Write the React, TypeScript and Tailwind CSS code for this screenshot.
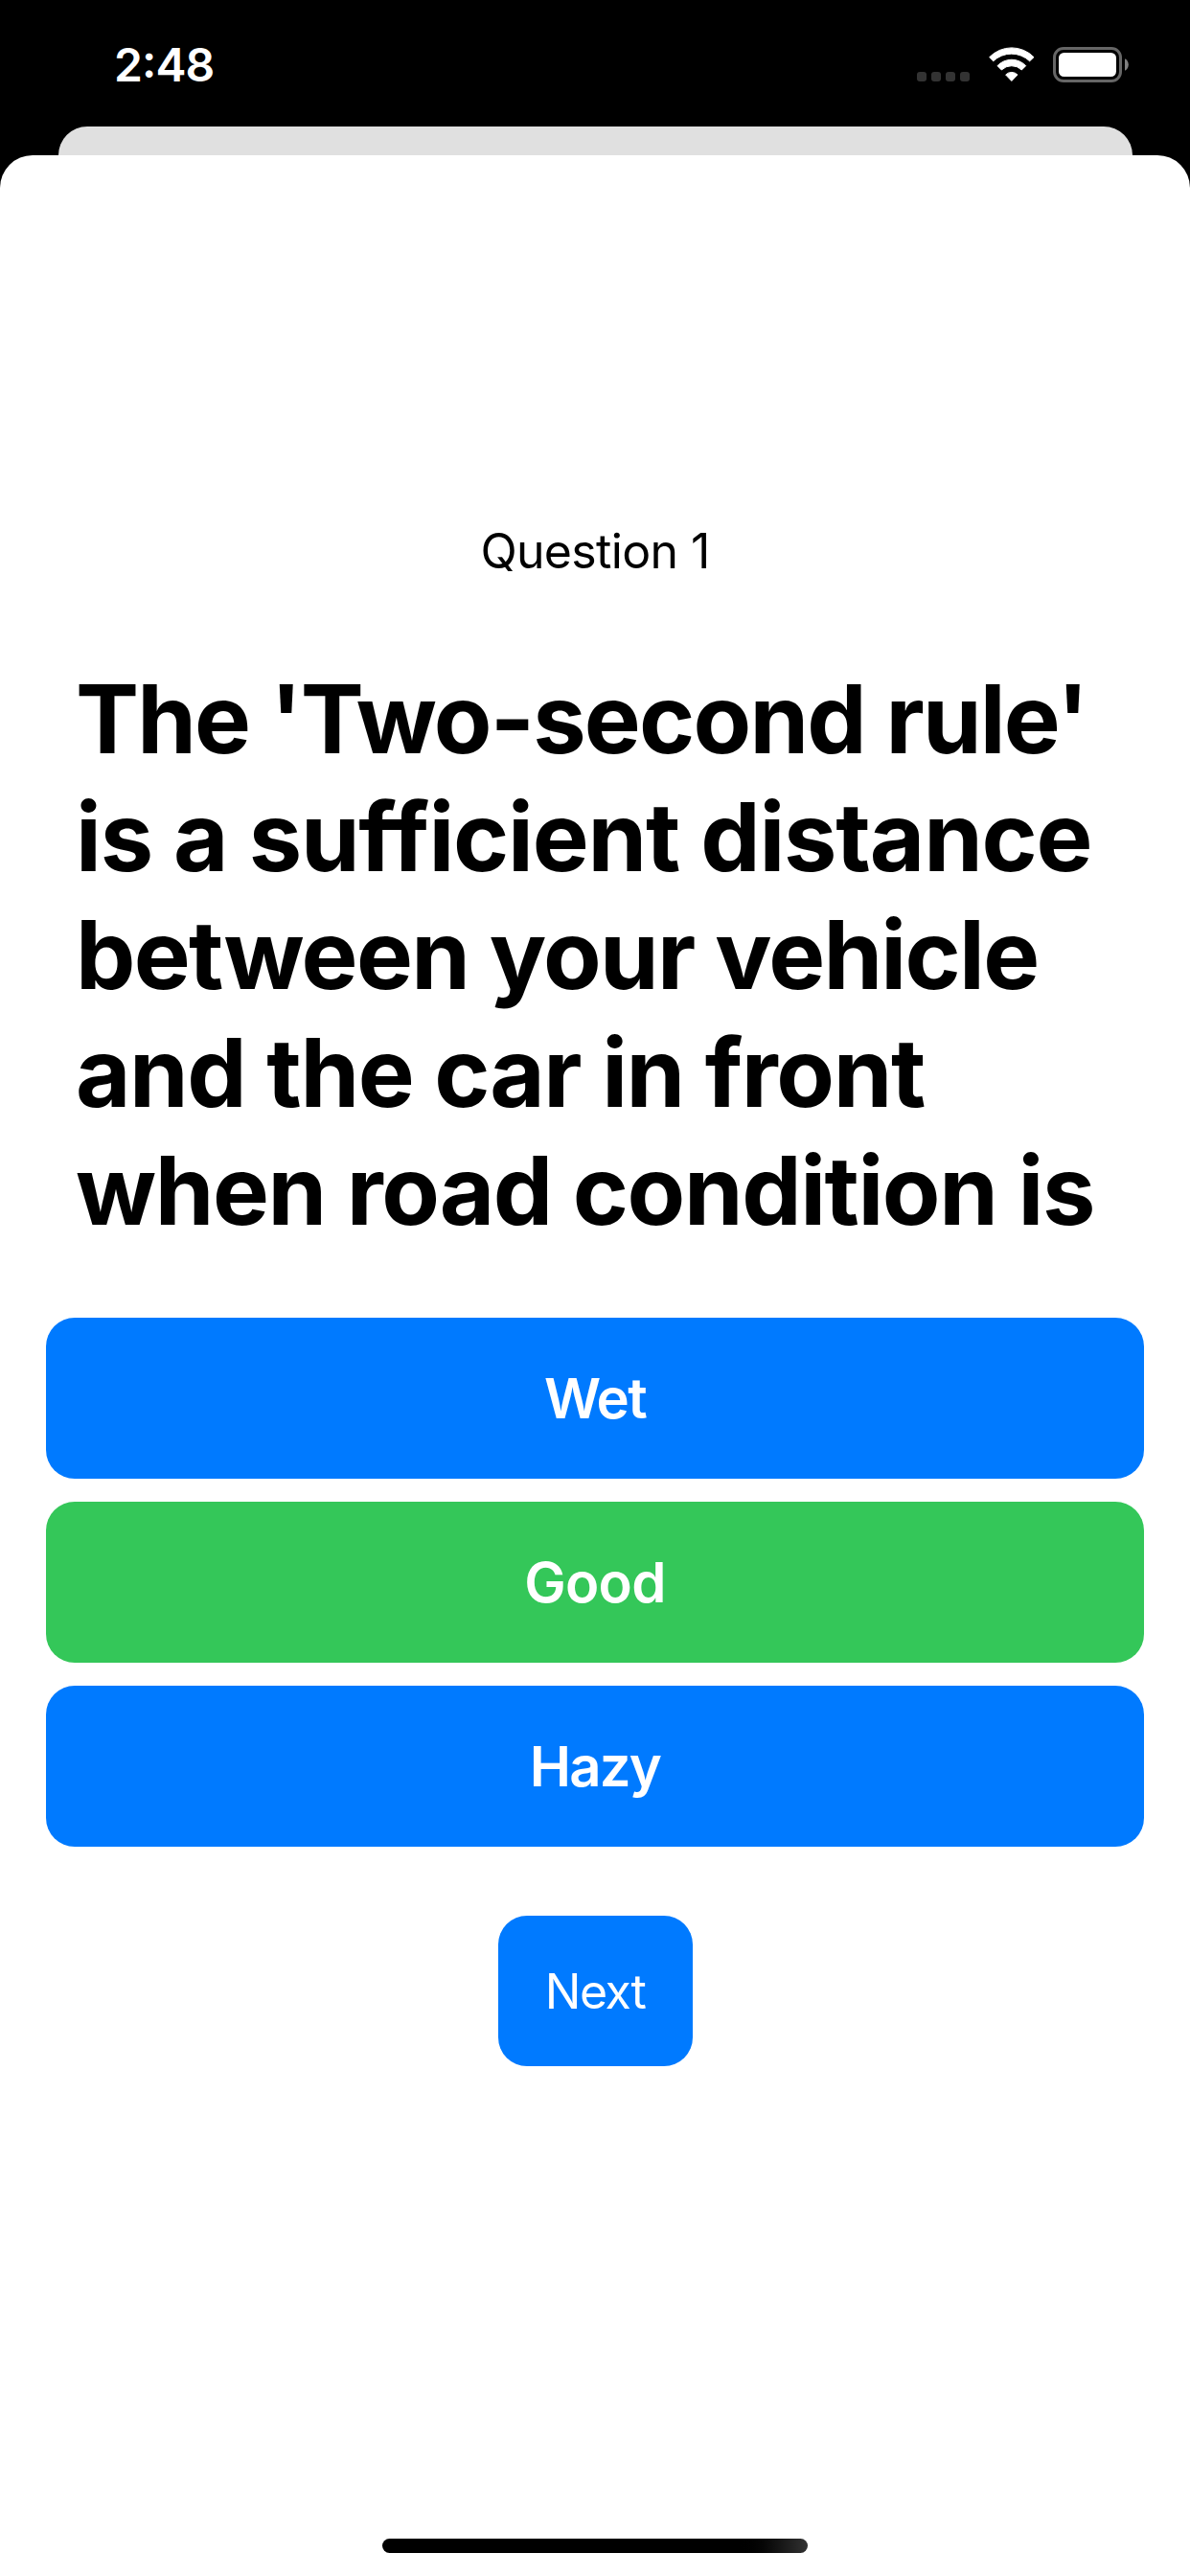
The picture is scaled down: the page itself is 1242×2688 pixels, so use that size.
type Answer = { label: string; className: string };

const questionLines = [
  { text: "The 'Two-second rule'", className: "tracking-[-1.8px]" },
  { text: "is a sufficient distance", className: "tracking-[-1.2px]" },
  { text: "between your vehicle", className: "tracking-[-1.7px]" },
  { text: "and the car in front", className: "tracking-[-1.4px]" },
  { text: "when road condition is", className: "tracking-[-1.4px]" },
];

const answers: Answer[] = [
  { label: "Wet", className: "bg-[#007aff] tracking-[-1.7px]" },
  { label: "Good", className: "bg-[#34c759] tracking-[-0.7px]" },
  { label: "Hazy", className: "bg-[#007aff] tracking-[-1.8px]" },
];

function WifiIcon() {
  return (
    <svg className="ml-[19.5px] h-[36.33px] w-[48px]" viewBox="395 147 144 109" fill="white" stroke="white" strokeWidth="3" strokeLinejoin="round">
      <path d="M397 179A97 97 0 0 1 536 179L523 191.5A82 82 0 0 0 409 191.5Z" />
      <path d="M422 206A61 61 0 0 1 511 206L498 219A45 45 0 0 0 435 219Z" />
      <path d="M448 234A26 26 0 0 1 485 234L466.5 253.5Z" />
    </svg>
  );
}

function BatteryIcon() {
  return (
    <svg className="ml-[19.5px] h-[37px] w-[80px]" viewBox="0 0 80 37" fill="none">
      <rect x="1.5" y="1.5" width="69" height="34" rx="9.5" stroke="#666666" strokeWidth="3" />
      <rect x="6" y="6" width="60" height="25" rx="5.5" fill="white" />
      <path d="M75 12.2C77.3 13.3 78.8 15.7 78.8 18.5S77.3 23.7 75 24.8Z" fill="#808080" />
    </svg>
  );
}

function StatusBar() {
  return (
    <div className="flex h-[132px] items-start justify-between pl-[119px] pr-[63px] text-white">
      <div className="mt-[37.5px] text-[48px] leading-[60px] font-semibold tracking-[-0.9px]">
        2<span className="relative top-[-4px]">:</span>48
      </div>
      <div className="mt-[49px] flex items-start">
        <div className="mt-[26px] flex gap-[5px]">
          {[0, 1, 2, 3].map((i) => (
            <span key={i} className="size-[10px] rounded-[3px] bg-[#333333]" />
          ))}
        </div>
        <WifiIcon />
        <BatteryIcon />
      </div>
    </div>
  );
}

export default function App() {
  return (
    <div className="flex h-[2688px] w-[1242px] flex-col overflow-hidden bg-black font-['Inter',sans-serif]">
      <StatusBar />
      <div className="mx-[60.5px] h-[30px] shrink-0 rounded-t-[30px] bg-[#e0e0e0]" />
      <main className="flex flex-1 flex-col items-center rounded-t-[34px] bg-white pt-[383px] text-black">
        <p className="text-[50px] leading-[60px] tracking-[-0.65px]">Question 1</p>
        <h1 className="mt-[84px] w-full pl-[79px] text-[99px] leading-[123px] font-bold whitespace-nowrap">
          {questionLines.map((line) => (
            <span key={line.text} className={`block ${line.className}`}>
              {line.text}
            </span>
          ))}
        </h1>
        <div className="mt-[71px] flex w-full flex-col gap-6 px-12">
          {answers.map((answer) => (
            <button
              key={answer.label}
              className={`h-[168px] w-full rounded-[30px] text-[58px] font-semibold text-white ${answer.className}`}
            >
              {answer.label}
            </button>
          ))}
        </div>
        <button className="mt-[72px] h-[157px] w-[203px] rounded-[30px] bg-[#007aff] pt-px text-[50px] tracking-[-1.4px] text-white">
          Next
        </button>
        <div className="mt-auto mb-6 h-[15px] w-[444px] rounded-full bg-linear-to-r from-black from-83% to-[#333333]" />
      </main>
    </div>
  );
}
